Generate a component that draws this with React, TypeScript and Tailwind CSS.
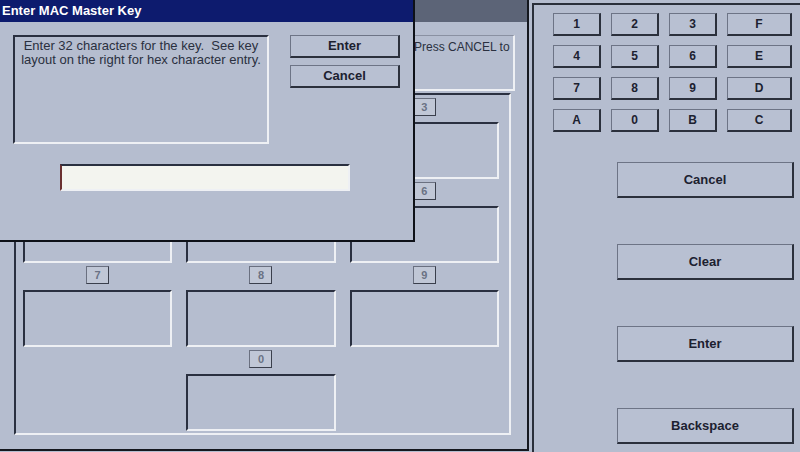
const cells = [
  ['1', '2', '3'],
  ['4', '5', '6'],
  ['7', '8', '9'],
  ['', '0', ''],
];

const pad = [
  ['1', '2', '3', 'F'],
  ['4', '5', '6', 'E'],
  ['7', '8', '9', 'D'],
  ['A', '0', 'B', 'C'],
];

function KeyButton({ label, wide }: { label: string; wide?: boolean }) {
  return (
    <button
      className={
        'h-[23px] border border-t-[#6d7486] border-l-[#6d7486] border-r-2 border-b-2 border-r-[#2b303c] border-b-[#2b303c] bg-[#b8c0d2] text-[12px] font-bold text-[#1c2130] ' +
        (wide ? 'w-[65px]' : 'w-[48px]')
      }
    >
      {label}
    </button>
  );
}

function BigButton({ label }: { label: string }) {
  return (
    <button className="h-[36px] w-[177px] border border-t-[#6d7486] border-l-[#6d7486] border-r-2 border-b-2 border-r-[#2b303c] border-b-[#2b303c] bg-[#b8c0d2] text-[13px] font-bold text-[#1c2130]">
      {label}
    </button>
  );
}

function Cell({ n }: { n: string }) {
  if (!n) return <div />;
  return (
    <div className="flex flex-col items-center">
      <div className="flex h-[18px] w-[23px] items-center justify-center border border-[#6a7080] border-r-[#3a3f4c] border-b-[#3a3f4c] bg-[#c0c7d6] text-[11px] font-bold text-[#6a7284]">
        {n}
      </div>
      <div className="mt-[6px] h-[57px] w-full border-2 border-t-[#2a3040] border-l-[#2a3040] border-r-[#eef0f4] border-b-[#eef0f4]" />
    </div>
  );
}

export default function App() {
  return (
    <div
      className="flex h-[452px] w-[800px] overflow-hidden bg-[#b5bdcf] text-[#1c2130]"
      style={{ fontFamily: '"Liberation Sans", Arial, sans-serif' }}
    >
      {/* background window */}
      <div className="relative flex h-[451px] w-[529px] flex-col border-r-2 border-b-2 border-[#15181f]">
        <div className="h-[22px] bg-[#5c6477]" />
        <div className="ml-[14px] mt-[13px] flex h-[56px] w-[501px] overflow-hidden whitespace-nowrap border border-t-[#8a91a2] border-l-[#8a91a2] border-r-2 border-b-2 border-r-[#eef0f4] border-b-[#eef0f4] pl-[399px] pt-[2px] text-[12px] text-[#2a3040]">
          Press CANCEL to
        </div>
        <div className="ml-[14px] mt-[2px] grid h-[342px] w-[497px] grid-cols-3 content-start gap-x-[14px] gap-y-[3px] border-2 border-t-[#2a3040] border-l-[#2a3040] border-r-[#eef0f4] border-b-[#eef0f4] pl-[7px] pr-[10px] pt-[3px]">
          {cells.flat().map((n, i) => (
            <Cell key={i} n={n} />
          ))}
        </div>

        {/* dialog */}
        <div className="absolute left-0 top-0 flex h-[242px] w-[415px] flex-col border-r-2 border-b-2 border-[#0e1118] bg-[#b5bdcf]">
          <div className="flex h-[22px] items-center bg-[#0d1b6e] pl-[2px] text-[13px] font-bold text-white">
            Enter MAC Master Key
          </div>
          <div className="flex px-[13px] pt-[13px]">
            <div className="h-[109px] w-[256px] border-2 border-t-[#2a3040] border-l-[#2a3040] border-r-[#eef0f4] border-b-[#eef0f4] pt-[2px] text-center text-[13px] leading-[14px] text-[#2a3040]">
              Enter 32 characters for the key.&nbsp; See key
              <br />
              layout on the right for hex character entry.
            </div>
            <div className="ml-[21px] flex flex-col gap-[7px]">
              <button className="h-[23px] w-[110px] border border-t-[#6d7486] border-l-[#6d7486] border-r-2 border-b-2 border-r-[#2b303c] border-b-[#2b303c] bg-[#b8c0d2] text-[13px] font-bold text-[#1c2130]">
                Enter
              </button>
              <button className="h-[23px] w-[110px] border border-t-[#6d7486] border-l-[#6d7486] border-r-2 border-b-2 border-r-[#2b303c] border-b-[#2b303c] bg-[#b8c0d2] text-[13px] font-bold text-[#1c2130]">
                Cancel
              </button>
            </div>
          </div>
          <div className="ml-[60px] mt-[20px] h-[27px] w-[290px] border-2 border-t-[#2a3040] border-l-[#6a3030] border-r-[#eef0f4] border-b-[#eef0f4] bg-[#f3f4ef]" />
        </div>
      </div>

      {/* keypad panel */}
      <div className="ml-[3px] mt-[3px] flex flex-1 flex-col border-l-2 border-t-2 border-[#2a2f3a] pb-[6px] pl-[19px] pr-[6px] pt-[8px]">
        <div className="flex flex-col gap-[9px]">
          {pad.map((row, r) => (
            <div key={r} className="flex gap-[10px]">
              {row.map((k, c) => (
                <KeyButton key={k} label={k} wide={c === 3} />
              ))}
            </div>
          ))}
        </div>
        <div className="mt-[30px] flex flex-col items-end gap-[46px]">
          <BigButton label="Cancel" />
          <BigButton label="Clear" />
          <BigButton label="Enter" />
          <BigButton label="Backspace" />
        </div>
      </div>
    </div>
  );
}
